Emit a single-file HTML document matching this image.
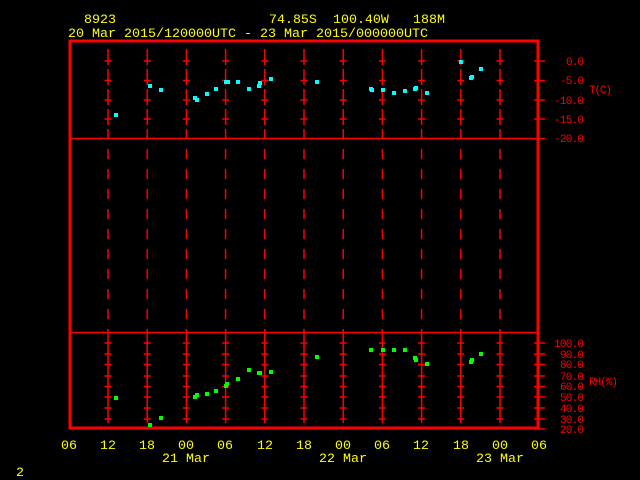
<!DOCTYPE html>
<html><head><style>
html,body{margin:0;padding:0;background:#000;width:640px;height:480px;overflow:hidden}
svg{display:block}
text{font-family:"Liberation Mono",monospace}
</style></head><body>
<svg width="640" height="480" viewBox="0 0 640 480" xmlns="http://www.w3.org/2000/svg">
<g fill="#ffff00" font-size="13.3">
<text x="84" y="23">8923</text>
<text x="269" y="23">74.85S</text>
<text x="333" y="23">100.40W</text>
<text x="413" y="23">188M</text>
<text x="68" y="37" textLength="360" lengthAdjust="spacingAndGlyphs">20 Mar 2015/120000UTC - 23 Mar 2015/000000UTC</text>
<g text-anchor="middle">
<text x="69" y="449">06</text><text x="108" y="449">12</text><text x="147" y="449">18</text><text x="186" y="449">00</text><text x="225" y="449">06</text><text x="265" y="449">12</text><text x="304" y="449">18</text><text x="343" y="449">00</text><text x="382" y="449">06</text><text x="421" y="449">12</text><text x="461" y="449">18</text><text x="500" y="449">00</text><text x="539" y="449">06</text>
<text x="186" y="462">21 Mar</text><text x="343" y="462">22 Mar</text><text x="500" y="462">23 Mar</text>
</g>
<text x="16" y="476">2</text>
</g>
<g stroke="#ff0000" fill="none">
<rect x="70" y="41" width="468" height="387" stroke-width="3"/>
<line x1="70" y1="138.5" x2="545" y2="138.5" stroke-width="1.5"/>
<line x1="70" y1="332.5" x2="538" y2="332.5" stroke-width="1.5"/>
<g id="col" stroke-width="1.5">
<path d="M108 49V65M108 69V85M108 89V105M108 109V125M108 129V138M104.5 61H111.5M104.5 80.5H111.5M104.5 100H111.5M104.5 119H111.5"/>
<path d="M108 149V159M108 169V179M108 189V199M108 209V219M108 229V239M108 249V259M108 269V279M108 289V299M108 309V319"/>
<path d="M108 329V423M104.5 343H111.5M104.5 354H111.5M104.5 364.5H111.5M104.5 376H111.5M104.5 386.5H111.5M104.5 397H111.5M104.5 408H111.5M104.5 419H111.5"/>
</g>
<use href="#col" x="39.2"/><use href="#col" x="78.4"/><use href="#col" x="117.6"/><use href="#col" x="156.8"/><use href="#col" x="196"/><use href="#col" x="235.2"/><use href="#col" x="274.4"/><use href="#col" x="313.6"/><use href="#col" x="352.8"/><use href="#col" x="392"/>
<path stroke-width="1.5" d="M534 61H545M534 80.5H545M534 100H545M534 119H545M534 343H545M534 354H545M534 364.5H545M534 376H545M534 386.5H545M534 397H545M534 408H545M534 419H545M534 429H545"/>
</g>
<g fill="#ff0000" font-size="11" text-anchor="end">
<text x="584" y="65" textLength="18">0.0</text><text x="584" y="84" textLength="24">-5.0</text><text x="584" y="104" textLength="30">-10.0</text><text x="584" y="123" textLength="30">-15.0</text><text x="584" y="142" textLength="30">-20.0</text>
<text x="584" y="347" textLength="30">100.0</text><text x="584" y="358" textLength="24">90.0</text><text x="584" y="368" textLength="24">80.0</text><text x="584" y="380" textLength="24">70.0</text><text x="584" y="390" textLength="24">60.0</text><text x="584" y="401" textLength="24">50.0</text><text x="584" y="412" textLength="24">40.0</text><text x="584" y="423" textLength="24">30.0</text><text x="584" y="433" textLength="24">20.0</text>
<text x="589" y="93" text-anchor="start" textLength="23">T(C)</text><text x="589" y="385" text-anchor="start" textLength="29">RH(%)</text>
</g>
<g fill="#00ffff">
<rect x="114" y="113" width="4" height="4"/><rect x="148" y="84" width="4" height="4"/><rect x="159" y="88" width="4" height="4"/><rect x="193" y="96" width="4" height="4"/><rect x="195" y="98" width="4" height="4"/><rect x="205" y="92" width="4" height="4"/><rect x="214" y="87" width="4" height="4"/><rect x="224" y="80" width="4" height="4"/><rect x="226" y="80" width="4" height="4"/><rect x="236" y="80" width="4" height="4"/><rect x="247" y="87" width="4" height="4"/><rect x="257" y="84" width="4" height="4"/><rect x="258" y="81" width="4" height="4"/><rect x="269" y="77" width="4" height="4"/><rect x="315" y="80" width="4" height="4"/>
<rect x="369" y="87" width="4" height="4"/><rect x="370" y="88" width="4" height="4"/><rect x="381" y="88" width="4" height="4"/><rect x="392" y="91" width="4" height="4"/><rect x="403" y="89" width="4" height="4"/><rect x="413" y="87" width="4" height="4"/><rect x="414" y="86" width="4" height="4"/><rect x="425" y="91" width="4" height="4"/><rect x="459" y="60" width="4" height="4"/><rect x="469" y="76" width="4" height="4"/><rect x="470" y="75" width="4" height="4"/><rect x="479" y="67" width="4" height="4"/>
</g>
<g fill="#00ff00">
<rect x="114" y="396" width="4" height="4"/><rect x="148" y="423" width="4" height="4"/><rect x="159" y="416" width="4" height="4"/><rect x="193" y="395" width="4" height="4"/><rect x="195" y="393" width="4" height="4"/><rect x="205" y="392" width="4" height="4"/><rect x="214" y="389" width="4" height="4"/><rect x="224" y="384" width="4" height="4"/><rect x="225" y="382" width="4" height="4"/><rect x="236" y="377" width="4" height="4"/><rect x="247" y="368" width="4" height="4"/><rect x="257" y="371" width="4" height="4"/><rect x="258" y="371" width="4" height="4"/><rect x="269" y="370" width="4" height="4"/><rect x="315" y="355" width="4" height="4"/>
<rect x="369" y="348" width="4" height="4"/><rect x="381" y="348" width="4" height="4"/><rect x="392" y="348" width="4" height="4"/><rect x="403" y="348" width="4" height="4"/><rect x="413" y="356" width="4" height="4"/><rect x="414" y="358" width="4" height="4"/><rect x="425" y="362" width="4" height="4"/><rect x="469" y="360" width="4" height="4"/><rect x="470" y="358" width="4" height="4"/><rect x="479" y="352" width="4" height="4"/>
</g>
</svg>
</body></html>
